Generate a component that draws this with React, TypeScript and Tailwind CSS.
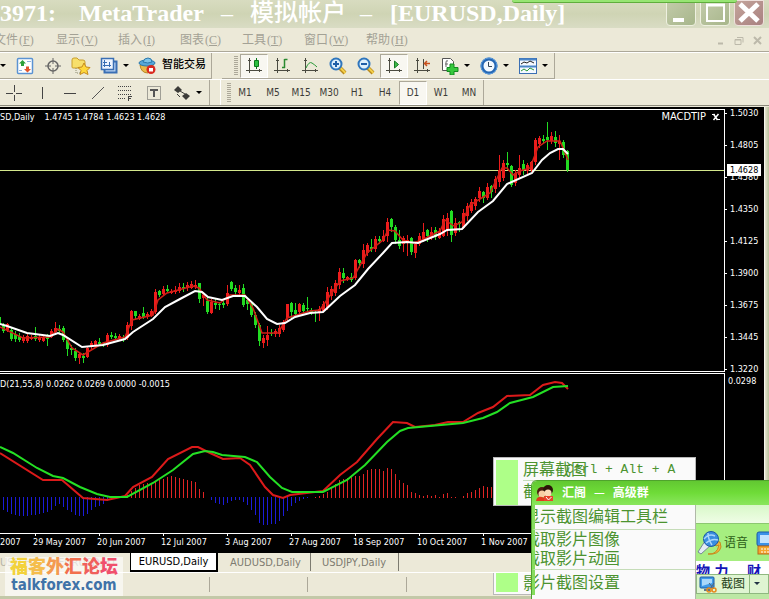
import type { ReactNode } from "react";

type Candle = [dir: "u" | "d", high: number, top: number, bottom: number, low: number];

// Screen rows of each candle, one every 4px
const candles: Candle[] = [
  ["d",315,317,325,327],["d",323,325,331,333],["u",323,324,330,332],["d",327,330,339,341],["d",331,334,339,342],
  ["d",333,336,340,342],["u",335,337,341,343],["u",333,336,341,343],["u",335,337,339,340],["d",327,336,339,341],
  ["u",335,337,340,342],["u",336,337,341,342],["d",334,336,339,346],["u",329,331,337,338],["u",322,328,332,334],
  ["d",325,329,331,333],["d",326,328,340,342],["d",338,340,349,356],["d",345,348,350,355],["d",348,351,358,361],
  ["u",353,354,358,364],["d",353,356,358,363],["u",346,348,357,358],["u",341,343,347,349],["u",340,341,345,347],
  ["d",338,342,344,345],["d",342,343,345,347],["u",333,335,345,347],["d",332,335,337,339],["d",333,336,338,340],
  ["u",334,336,339,341],["d",335,337,338,342],["u",322,325,338,340],["u",310,311,326,330],["d",311,311,316,320],
  ["u",314,316,319,320],["d",307,313,317,319],["u",312,314,317,319],["u",309,311,316,317],["u",289,292,312,314],
  ["d",290,291,295,297],["u",286,289,294,296],["d",285,289,291,292],["u",289,291,293,294],["u",286,290,292,294],
  ["u",283,287,291,293],["d",283,287,288,292],["u",282,285,288,291],["u",281,284,288,289],["u",280,285,287,289],
  ["d",283,283,299,303],["u",292,295,298,306],["d",298,301,312,314],["u",299,302,313,314],["d",299,303,305,309],
  ["d",302,304,305,310],["d",300,303,305,308],["u",285,293,304,306],["d",281,282,289,291],["d",285,288,292,295],
  ["u",285,290,293,296],["d",284,288,305,307],["d",298,300,304,310],["d",302,304,315,317],["d",312,315,325,328],
  ["d",323,325,341,346],["u",335,338,343,348],["u",326,335,340,346],["d",329,333,334,336],["u",329,331,334,337],
  ["u",325,328,334,337],["u",320,322,330,332],["u",304,304,318,322],["d",302,303,312,318],["d",303,310,314,316],
  ["u",303,304,312,314],["d",303,305,311,313],["d",297,308,309,312],["d",308,310,312,315],["d",310,312,313,322],
  ["u",306,309,312,321],["u",301,304,311,312],["u",287,292,308,310],["u",286,289,296,300],["u",280,283,293,296],
  ["u",268,272,285,289],["d",268,273,278,283],["u",276,277,279,281],["d",273,277,280,282],["u",259,260,278,280],
  ["d",259,260,263,268],["u",244,250,264,268],["u",243,245,253,256],["d",239,247,249,252],["u",236,239,249,252],
  ["d",236,239,241,244],["u",230,236,241,242],["u",218,222,236,242],["d",218,219,227,232],["d",225,227,240,244],
  ["d",230,240,246,249],["u",236,238,244,252],["u",235,240,242,256],["d",237,238,252,255],["u",242,244,253,258],
  ["u",233,236,244,246],["u",223,232,240,242],["d",229,230,236,242],["u",227,232,238,240],["d",227,230,237,240],
  ["u",228,231,238,239],["u",215,219,236,237],["u",213,218,230,236],["d",210,211,235,242],["u",218,223,233,236],
  ["d",221,222,224,232],["u",209,213,228,229],["u",203,206,216,221],["u",199,202,211,213],["u",197,199,206,210],
  ["u",187,191,198,202],["d",191,192,198,203],["u",183,187,198,200],["d",185,186,192,198],["u",176,179,189,193],
  ["u",155,170,182,187],["u",160,163,178,181],["d",152,163,165,170],["d",165,166,185,187],["u",170,173,183,186],
  ["u",155,168,175,178],["d",160,164,170,175],["u",163,165,171,174],["u",161,162,170,172],["u",138,140,162,165],
  ["u",136,138,144,148],["d",135,139,141,143],["d",122,137,140,150],["u",132,136,141,144],["d",131,137,143,147],
  ["u",135,141,144,160],["d",140,142,155,158],["d",150,151,170,172],
];

// Positive bars are drawn red above the zero line, negative ones blue below
const histogram = [
  -13,-15,-17,-18,-19,-19,-19,-18,-18,-17,-16,-15,-13,-9,-7,-10,-13,-15,-18,-19,-19,-17,-13,-10,-9,-7,-4,-2,0,0,0,
  3,7,10,13,14,15,15,17,18,19,21,22,21,20,19,18,17,16,9,6,0,
  -3,-6,-7,-8,-6,-4,-3,-3,-5,-8,-13,-18,-26,-28,-28,-27,-27,-24,-19,-14,-9,-6,-4,-2,-1,0,
  1,2,4,6,10,14,18,19,20,21,22,22,24,28,29,29,29,27,30,29,24,18,15,13,6,5,3,2,3,2,3,1,4,5,1,1,0,
  2,5,6,8,10,12,11,11,10,11,11,10,
];

const slowLine =
  "0,324 7,326 27,333 50,336 58,333 63,335 82,347 103,345 125,339 133,332 153,319 165,307 180,299 195,291 202,292 208,297 222,300 233,296 245,296 257,307 267,319 277,324 285,323 295,317 310,313 323,312 340,296 355,285 368,269 383,253 392,243 407,242 418,243 440,234 447,230 462,229 478,212 493,201 507,184 532,173 542,160 550,153 558,149 563,149 568,154";
const fastLine =
  "0,327 23,338 50,337 58,329 63,332 72,348 83,355 88,352 103,343 125,337 132,320 153,315 158,300 167,293 193,286 199,288 207,300 220,303 230,295 245,295 253,308 262,333 278,333 287,318 310,311 320,310 340,281 353,278 367,253 383,240 388,230 395,231 403,240 413,243 422,240 440,231 445,220 454,226 462,222 470,205 490,193 502,168 507,168 513,175 520,171 530,168 538,147 547,141 560,141 568,160";
const macdLine =
  "0,453 43,480 62,480 83,498 107,500 125,496 133,487 152,477 168,459 192,447 198,447 210,453 223,459 240,458 250,465 265,487 273,495 283,498 290,495 323,491 340,475 357,462 377,439 393,422 407,423 415,427 435,425 448,422 463,422 478,413 493,407 507,396 530,395 543,385 555,382 562,383 568,389";
const signalLine =
  "0,447 13,453 37,468 53,476 63,478 80,487 97,494 110,497 127,497 153,483 173,470 193,454 205,451 213,452 222,455 245,457 257,462 270,477 282,488 292,492 323,492 347,480 365,465 387,442 400,431 408,428 463,423 483,418 497,412 510,403 533,397 553,387 568,386";

const prices = ["1.5030", "1.4805", "1.4580", "1.4350", "1.4125", "1.3900", "1.3675", "1.3445", "1.3220"];
const dates = ["29 May 2007", "20 Jun 2007", "12 Jul 2007", "3 Aug 2007", "27 Aug 2007", "18 Sep 2007", "10 Oct 2007", "1 Nov 2007"];
const menus = [
  ["文件", "F"], ["显示", "V"], ["插入", "I"], ["图表", "C"], ["工具", "T"], ["窗口", "W"], ["帮助", "H"],
];
const periods = ["M1", "M5", "M15", "M30", "H1", "H4", "D1", "W1", "MN"];

export default function App() {
  return (
    <div className="relative flex min-h-screen w-full flex-col overflow-hidden bg-[#ece9d8] font-['DejaVu_Sans_Condensed','DejaVu_Sans','Noto_Sans_CJK_SC',sans-serif]">
      <TitleBar />
      <MenuBar />
      <StandardToolbar />
      <PeriodToolbar />
      <div className="flex border-t border-[#8c8a7c] pt-px">
        <Chart />
        <div className="w-[5px] shrink-0 border-l border-[#f6f6ee] bg-gradient-to-r from-[#e4e4cf] to-[#bcc29e]" />
      </div>
      <ChartTabs />
      <StatusBar />
      <CaptureMenu />
      <ChatWindow />
    </div>
  );
}

function TitleBar() {
  return (
    <header className="flex h-7 items-center justify-between bg-gradient-to-b from-[#d8dcc0] via-[#cfd4b4] to-[#d9dcc4]">
      <h1 className="flex items-center whitespace-pre pb-0.5 font-['Liberation_Serif','Noto_Sans_CJK_SC',serif] text-2xl leading-6 font-bold text-white">
        <span className="w-[79px]">3971:</span>
        <span className="w-[142px]">MetaTrader</span>
        <span className="w-[29px] font-normal">–</span>
        <span className="w-[110px] font-medium">模拟帐户</span>
        <span className="w-[30px] font-normal">–</span>
        <span>[EURUSD,Daily]</span>
      </h1>
      <div className="flex h-7 gap-1 pr-[5px]">
        <button aria-label="Minimize" className="h-[26px] w-[30px] rounded-b border border-[#eef0e0] bg-gradient-to-br from-[#c3cbaa] to-[#a7b68b]">
          <svg width="28" height="24"><rect x="6" y="17" width="11" height="4" fill="#fff" /></svg>
        </button>
        <button aria-label="Maximize" className="h-[26px] w-[30px] rounded-b border border-[#eef0e0] bg-gradient-to-br from-[#c3cbaa] to-[#a7b68b]">
          <svg width="28" height="24"><path d="M6 4h17v16H6z" fill="none" stroke="#fff" strokeWidth="2" /><path d="M5 4h19" stroke="#fff" strokeWidth="3" /></svg>
        </button>
        <button aria-label="Close" className="h-[26px] w-[30px] rounded-b border border-[#eee0dc] bg-gradient-to-br from-[#c4a59c] to-[#a98180]">
          <svg width="28" height="24"><path d="M5 3l18 17M23 3L5 20" stroke="#fff" strokeWidth="5" /></svg>
        </button>
      </div>
      <div className="absolute top-0 right-8 h-[3px] w-[225px] rounded-b-lg border-b border-[#5fae3c] bg-[#97e573]" />
    </header>
  );
}

function MenuBar() {
  return (
    <nav className="flex h-6 items-center justify-between border-b border-[#aca899] pr-[6px] text-[#a3a195]">
      <div className="-ml-1.5 flex">
        {menus.map(([name, key]) => (
          <button key={key} className="flex w-[62px] items-center text-xs leading-4 whitespace-nowrap">
            {name}
            <span className="pl-px font-['Liberation_Serif',serif]">(<u>{key}</u>)</span>
          </button>
        ))}
      </div>
      <svg width="46" height="12" fill="none" stroke="#bcb9aa">
        <path d="M1 9.500h5" strokeWidth="2" />
        <path d="M20 3.500h6v5M18 5.500h6v5h-6zM18 6h6" />
        <path d="M37 3l7 7M44 3l-7 7" strokeWidth="2" />
      </svg>
    </nav>
  );
}

function ToolButton({ label, pressed, children }: { label: string; pressed?: boolean; children: ReactNode }) {
  return (
    <button
      aria-label={label}
      className={`flex h-6 w-7 shrink-0 items-center justify-center border ${
        pressed ? "border-[#aca899] border-r-white border-b-white bg-[#f8f7f1]" : "border-transparent"
      }`}
    >
      {children}
    </button>
  );
}

function DropArrow({ label }: { label: string }) {
  return (
    <button aria-label={label} className="flex h-6 w-[11px] shrink-0 items-center">
      <svg width="6" height="4"><path d="M0 0h6L3 3z" fill="#000" /></svg>
    </button>
  );
}

function Grip() {
  return (
    <div className="flex flex-col gap-px pl-1">
      {Array.from({ length: 10 }, (_, i) => (
        <span key={i} className="h-px w-1 bg-[#aca899]" />
      ))}
    </div>
  );
}

const axes = "M3.500 1v15M0 13.500h16M2 3.500h3M13.500 12v3";

function StandardToolbar() {
  return (
    <div className="flex h-[27px] border-t border-white">
      <div className="flex w-[212px] items-center border-r border-b border-[#aca899]">
        <DropArrow label="New chart list" />
        <ToolButton label="Market watch">
          <svg width="18" height="18"><rect x="1.500" y="1.500" width="15" height="15" rx="1" fill="#fff" stroke="#5b93d2" strokeWidth="1.500" /><path d="M6.500 3l3.500 3.500H8V9H5V6.500H3z" fill="#2fa03a" /><path d="M11.500 15.500L8 12h2V9.500h3V12h2z" fill="#e2552c" /><path d="M11 4.500h4M3 13.500h3" stroke="#8fb4e0" /></svg>
        </ToolButton>
        <ToolButton label="Data window">
          <svg width="16" height="16" fill="none" stroke="#666"><circle cx="8" cy="8" r="5" strokeWidth="1.500" /><path d="M8 0v6M8 10v6M0 8h6M10 8h6" /></svg>
        </ToolButton>
        <ToolButton label="Navigator">
          <svg width="20" height="18"><path d="M1 3q0-2 2-2h3l2 2h4q2 0 2 2v5q0 1-1 1H2q-1 0-1-1z" fill="#f7df6b" stroke="#c99e2c" /><path d="M5 11v5h5" fill="none" stroke="#8a8a70" strokeDasharray="1 1" /><path d="M13 6l2 4 4 .5-3 3 1 4-4-2-4 2 1-4-3-3 4-.5z" fill="#ffd83a" stroke="#c58a1c" /></svg>
        </ToolButton>
        <ToolButton label="Terminal">
          <svg width="18" height="18" stroke="#3a6fb4"><path d="M4.500 4.500h12v11h-12z" fill="#bcd5f2" strokeWidth="2" /><path d="M1.500 1.500h12v11h-12z" fill="#eef5ff" strokeWidth="1.500" /><path d="M4.500 3v7M3 8.500h8M9.500 5v5M3 5.500h4" fill="none" /></svg>
        </ToolButton>
        <DropArrow label="Window list" />
        <button className="flex h-6 items-center gap-1.5 pl-1 text-black">
          <svg width="18" height="18"><path d="M2 8q1 8 8 8l5-5V7z" fill="#e9b949" stroke="#b98520" /><ellipse cx="9" cy="6" rx="8" ry="3" fill="#57a7d8" stroke="#2b78ac" /><path d="M5 5q1-4 5-4t4 4q-4 2-9 0z" fill="#7cc4ea" stroke="#2b78ac" /><circle cx="13" cy="12.500" r="4.500" fill="#d92a20" /><rect x="11" y="11" width="4" height="3.500" fill="#fff" /></svg>
          <span className="text-[11px] font-medium whitespace-nowrap">智能交易</span>
        </button>
      </div>
      <div className="ml-[10px] flex w-[333px] items-center border-r border-b border-[#aca899] pl-2">
        <Grip />
        <div className="flex items-center pl-0.5">
          <ToolButton label="Candlesticks" pressed>
            <svg width="17" height="17" fill="none" stroke="#4a4a40"><path d={axes} /><path d="M10.500 1v11" stroke="#0a7a1c" /><path d="M8.500 3.500h4v6h-4z" fill="#2cc040" stroke="#0a7a1c" /></svg>
          </ToolButton>
          <ToolButton label="Bar chart">
            <svg width="17" height="17" fill="none" stroke="#4a4a40"><path d={axes} /><path d="M10.500 2v9M10.500 2.500h3M8 10.500h3" stroke="#2a8a30" strokeWidth="1.500" /></svg>
          </ToolButton>
          <ToolButton label="Line chart">
            <svg width="17" height="17" fill="none" stroke="#4a4a40"><path d={axes} /><path d="M4 11q3-7 6-5t5 4" stroke="#2a9a38" /></svg>
          </ToolButton>
          <ToolButton label="Zoom in"><Magnifier plus /></ToolButton>
          <ToolButton label="Zoom out"><Magnifier /></ToolButton>
          <ToolButton label="Auto scroll" pressed>
            <svg width="17" height="17" fill="none" stroke="#4a4a40"><path d={axes} /><path d="M8.500 4l4 3.500-4 3.500z" fill="#3cba48" stroke="#167a24" /></svg>
          </ToolButton>
          <ToolButton label="Chart shift">
            <svg width="17" height="17" fill="none" stroke="#4a4a40"><path d={axes} /><path d="M9.500 2v10" /><path d="M16 6.500h-5M13 4l-2.500 2.500L13 9" stroke="#c8501c" strokeWidth="1.500" /></svg>
          </ToolButton>
          <ToolButton label="Indicators">
            <svg width="18" height="18"><path d="M1.500 1.500h8l3 3v9h-11z" fill="#fff" stroke="#555" /><path d="M5 10V5q0-2 2-1M4 7h3" fill="none" stroke="#666" /><path d="M9 7h4v3.500h4v4h-4V18H9v-3.500H6v-4h3z" fill="#36c83c" stroke="#128a20" /></svg>
          </ToolButton>
          <DropArrow label="Indicator list" />
          <ToolButton label="Periods">
            <svg width="18" height="18"><circle cx="9" cy="9" r="7" fill="#f3f9ff" stroke="#2567b4" strokeWidth="3" /><circle cx="9" cy="9" r="8" fill="none" stroke="#5d9cdc" /><path d="M8.500 5v4.500H12" fill="none" stroke="#345" /></svg>
          </ToolButton>
          <DropArrow label="Period list" />
          <ToolButton label="Templates">
            <svg width="18" height="16"><rect x=".5" y=".5" width="17" height="15" fill="#f4f9ff" stroke="#3a6fb4" /><path d="M1 1.500h16M1 8.500h16" stroke="#4a86c8" strokeWidth="2" /><path d="M2 6l3-2 3 1 3-2 4 2" fill="none" stroke="#222" /><path d="M2 13l3-2 3 2 3-3 4 2" fill="none" stroke="#2a9a38" /></svg>
          </ToolButton>
          <DropArrow label="Template list" />
        </div>
      </div>
    </div>
  );
}

function Magnifier({ plus }: { plus?: boolean }) {
  return (
    <svg width="18" height="18">
      <path d="M10.500 10.500l5.500 5.500" stroke="#b98a1c" strokeWidth="4" />
      <path d="M11 10.500l5.500 5.500" stroke="#f3cf4a" strokeWidth="2" />
      <circle cx="7" cy="7" r="5.500" fill="#dff0fd" stroke="#2f76bd" strokeWidth="2" />
      <path d={plus ? "M4 7h6M7 4v6" : "M4 7h6"} stroke="#1f5fa8" strokeWidth="2" />
    </svg>
  );
}

function PeriodToolbar() {
  return (
    <div className="flex h-[26px] border-t border-white">
      <div className="flex w-[210px] items-center border-r border-[#aca899]">
        <ToolButton label="Crosshair"><svg width="16" height="16" stroke="#444"><path d="M8.500 0v7M8.500 10v6M0 8.500h7M10 8.500h6" /></svg></ToolButton>
        <ToolButton label="Vertical line"><svg width="14" height="14" stroke="#444"><path d="M7.500 1v12" /></svg></ToolButton>
        <ToolButton label="Horizontal line"><svg width="14" height="14" stroke="#444"><path d="M1 7.500h12" /></svg></ToolButton>
        <ToolButton label="Trend line"><svg width="14" height="14" stroke="#555"><path d="M1 13L13 1" /></svg></ToolButton>
        <ToolButton label="Fibonacci retracement">
          <svg width="16" height="18" fill="none" stroke="#444"><path d="M0 2.500h14M0 6.500h14M0 10.500h14M0 14.500h8" strokeDasharray="1 1" /><path d="M10.500 17v-5M10 12.500h4M10 14.500h3" /></svg>
        </ToolButton>
        <ToolButton label="Text label">
          <svg width="14" height="14" fill="none" stroke="#555"><path d="M.5.5h13v13H.5z" strokeDasharray="1 1" /><path d="M3 4h8M7 4v7" strokeWidth="2" /></svg>
        </ToolButton>
        <ToolButton label="Arrows">
          <svg width="16" height="14" fill="#3c3c38"><path d="M4 0l4 4-4 3-4-3zM12 7l4 3-4 4-4-4z" /><path d="M3 8l3 3M6 5l5 3" stroke="#3c3c38" /></svg>
        </ToolButton>
        <DropArrow label="Arrow list" />
      </div>
      <div className="ml-[10px] flex w-[264px] items-center border-r border-l border-[#aca899] border-l-white pl-0.5">
        <Grip />
        <div className="flex">
          {periods.map((p) => (
            <button
              key={p}
              aria-pressed={p === "D1"}
              className={`h-6 w-7 shrink-0 text-[10px] leading-4 text-[#3c3c38] ${
                p === "D1" ? "border border-[#aca899] border-r-white border-b-white bg-[#f8f7f1]" : ""
              }`}
            >
              {p}
            </button>
          ))}
        </div>
      </div>
    </div>
  );
}

function Chart() {
  return (
    <main className="min-w-0 flex-1 bg-black text-[9px] leading-3 text-white">
      <div className="flex pt-0.5">
        <div className="min-w-0 flex-1">
          <section className="relative h-[263px] overflow-hidden border-t border-r border-b border-white">
            <svg className="block h-full w-full" aria-label="EURUSD daily chart">
              <g transform="translate(0 -110)">
                <path d="M0 170.500h2000" stroke="#d4e88c" />
                {candles.map(([dir, high, top, bottom, low], i) => (
                  <g key={i} fill={dir === "u" ? "#ec1c1c" : "#22dc22"}>
                    <rect x={i * 4 - 1} y={high} width="1" height={low - high} />
                    <rect x={i * 4 - 2} y={top} width="3" height={bottom - top} />
                  </g>
                ))}
                <polyline points={fastLine} fill="none" stroke="#d01f16" strokeWidth="1.500" />
                <polyline points={slowLine} fill="none" stroke="#fff" strokeWidth="2" />
              </g>
            </svg>
            <div className="absolute inset-x-0 top-0 flex items-center justify-between pt-px pr-1">
              <div className="flex gap-[10px]">
                <span>SD,Daily</span>
                <span>1.4745 1.4784 1.4623 1.4628</span>
              </div>
              <div className="flex items-center gap-1.5 text-[11px]">
                <span>MACDTIP</span>
                <svg width="8" height="8" fill="none" stroke="#fff"><path d="M1.500 1l4 6M6.500 1l-5 6" strokeWidth="1.500" /><path d="M0 1.500h3M5 6.500h3" /></svg>
              </div>
            </div>
          </section>
          <section className="relative mt-px h-[161px] overflow-hidden border-t border-r border-b border-white">
            <svg className="block h-full w-full" aria-label="MACD indicator">
              <g transform="translate(0 -374)">
                {histogram.map((v, i) => (
                  <rect key={i} x={i * 4 + 3} y={v > 0 ? 498 - v : 497} width="1" height={Math.abs(v)} fill={v > 0 ? "#e02424" : "#1c1cd8"} />
                ))}
                <polyline points={macdLine} fill="none" stroke="#dc1a1a" strokeWidth="2" />
                <polyline points={signalLine} fill="none" stroke="#24e024" strokeWidth="2" />
              </g>
            </svg>
            <p className="absolute top-1 left-0">D(21,55,8) 0.0262 0.0269 0.0000 -0.0015</p>
          </section>
        </div>
        <div className="relative w-[39px] shrink-0">
          <ul className="-mt-0.5 h-[268px]">
            {prices.map((p, i) => (
              <li key={p} className={`flex items-center gap-[3px] ${i < prices.length - 1 ? "mb-5" : ""}`}>
                <span className="h-px w-0.5 bg-white" />
                {p}
              </li>
            ))}
          </ul>
          <p className="pl-[3px]">0.0298</p>
          <p className="absolute top-[55px] left-0.5 bg-white px-[3px] text-black">1.4628</p>
        </div>
      </div>
      <div className="flex h-[17px] overflow-hidden whitespace-nowrap">
        <span className="w-[33px] shrink-0 pt-0.5">2007</span>
        {dates.map((d) => (
          <div key={d} className="w-16 shrink-0">
            <span className="ml-0.5 block h-0.5 w-px bg-white" />
            {d}
          </div>
        ))}
      </div>
    </main>
  );
}

function ChartTabs() {
  return (
    <div className="relative flex h-[22px] items-start border-t-2 border-black border-b border-b-white text-[11px] text-[#7d7b70]">
      <div className="flex w-[130px] shrink-0 gap-5 overflow-hidden pt-0.5 leading-4 whitespace-nowrap text-[#b5b2a5]">
        <button>USD,H1</button>
        <button>EURUSD,H1</button>
      </div>
      <button className="h-[19px] w-[88px] shrink-0 border-r-2 border-b-2 border-l border-black bg-white leading-4 text-black">EURUSD,Daily</button>
      <button className="ml-3 w-[81px] border-r border-[#7d7b70] pt-0.5 text-left leading-4">AUDUSD,Daily</button>
      <button className="ml-[11px] w-[77px] border-r border-[#7d7b70] pt-0.5 text-left leading-4">USDJPY,Daily</button>
      <a href="#talkforex" className="absolute top-1 left-[5px] h-[39px] w-[118px] bg-white/60 text-center">
        <span className="block text-[18px] leading-5 font-black">
          <span className="text-[#f3d23c]">福</span>
          <span className="text-[#f5bd4c]">客</span>
          <span className="text-[#f49a50]">外</span>
          <span className="text-[#f2704e]">汇</span>
          <span className="text-[#f0605c]">论</span>
          <span className="text-[#f0506c]">坛</span>
        </span>
        <span className="block text-[15px] leading-4 font-bold text-[#3f73a8]">talkforex.com</span>
      </a>
    </div>
  );
}

function StatusBar() {
  return (
    <footer className="flex h-[26px] border-b-[3px] border-[#c3c8a8] py-1 pl-[110px]">
      <span className="w-[100px] border-r border-[#aca899]" />
      <span className="w-[98px] border-r border-[#aca899]" />
      <span className="w-[99px] border-r border-[#aca899]" />
    </footer>
  );
}

// Screen capture menu, partly hidden behind the chat window
function CaptureMenu() {
  return (
    <div className="text-base leading-5 whitespace-nowrap text-[#4c9330]">
      <div className="absolute right-[73px] bottom-[93px] flex h-[49px] w-[203px] border border-[#b8b8b8] bg-[#fafafa] p-0.5 pb-0">
        <span className="w-[22px] bg-[#aeff88]" />
        <div className="relative flex-1 pl-[5px]">
          <button className="flex h-[21px] w-full items-center border-b border-[#c5dcb8] text-left">
            屏幕截图
          </button>
          <kbd className="absolute top-0 left-12 font-['Liberation_Mono',monospace] text-[13px]">Ctrl + Alt + A</kbd>
          <button className="block pt-px">截取</button>
        </div>
      </div>
      <div className="absolute right-[73px] bottom-1 flex h-[22px] w-[203px] border border-t-0 border-[#b8b8b8] bg-[#fafafa] px-0.5">
        <span className="h-[19px] w-[22px] bg-[#aeff88]" />
        <button className="pl-[5px]">影</button>
      </div>
    </div>
  );
}

function ChatWindow() {
  return (
    <div className="absolute right-0 bottom-0 flex h-[119px] w-[238px] flex-col overflow-hidden rounded-tl-md border-t border-l border-[#4fa32c] bg-[#fafafa]">
      <div className="flex h-6 shrink-0 items-center gap-2 bg-gradient-to-b from-[#62c832] via-[#6fdc38] to-[#8ae65c] pl-1 text-xs font-bold text-white">
        <svg width="18" height="18"><circle cx="6" cy="8" r="5" fill="#4a1c10" /><circle cx="12" cy="6" r="5" fill="#2c1408" /><circle cx="6" cy="10" r="3.500" fill="#f8cfa4" /><circle cx="12" cy="9" r="3.500" fill="#fbdcb8" /><path d="M0 17q1-5 6-4t5 4z" fill="#e03c1c" /><path d="M8 12h9v5H8z" fill="#e8442c" /><path d="M10 13l2.500 3 3-3" fill="none" stroke="#fff" /></svg>
        <span className="flex gap-2 whitespace-nowrap"><span>汇阁</span><span className="font-normal">—</span><span>高级群</span></span>
      </div>
      <div className="flex min-h-0 flex-1">
        <div className="flex w-[164px] shrink-0 flex-col border-r border-[#b0b8a8]">
          <MenuLine lead="显" text="示截图编辑工具栏" className="h-6" />
          <MenuLine lead="截" text="取影片图像" className="h-5 border-t border-[#c5dcb8]" />
          <MenuLine lead="截" text="取影片动画" className="h-5" />
          <MenuLine lead="影" text="片截图设置" className="h-[26px] border-t border-[#c5dcb8]" />
        </div>
        <div className="flex min-w-0 flex-1 flex-col">
          <div className="h-[18px] bg-gradient-to-b from-[#d8f8c8] to-[#effde6]" />
          <div className="flex h-[38px] items-center overflow-hidden border-t border-[#8cc870] bg-[#a6ee80] text-xs text-[#2d5f18]">
            <button className="flex shrink-0 items-center gap-0.5">
              <svg width="26" height="26"><path d="M12 24q9 1 11-9l-3 1-4-5 8 1 1 5q-2 8-13 7z" fill="#f4b53c" stroke="#c88a1c" /><path d="M2 22l7-11 6 4-10 9z" fill="#e4ecf4" stroke="#789" /><circle cx="15" cy="9" r="7.500" fill="#3a8ee0" stroke="#1c5aa4" /><path d="M8 9q5-6 11-3M10 13q6-5 12-3M12 3q0 6 4 12" fill="none" stroke="#a9d6fb" strokeWidth="1.500" /></svg>
              语音
            </button>
            <button aria-label="Phone" className="shrink-0 pl-2">
              <svg width="14" height="24"><rect x="1" y="1" width="14" height="14" rx="2" fill="#3b92e8" stroke="#1c5aa4" /><rect x="4" y="4" width="11" height="8" fill="#c4e4ff" /><rect x="2" y="15" width="13" height="8" fill="#f5a62e" stroke="#b8681c" /><path d="M5 18h9M5 21h9" stroke="#fff" strokeDasharray="2 1" /></svg>
            </button>
          </div>
          <div className="h-[13px] shrink-0 overflow-hidden bg-white pt-0.5 font-bold text-[#1414b8]">
            <p className="flex justify-between pr-2 text-sm leading-4"><span>物 力</span><span>财</span></p>
          </div>
          <div className="flex h-5 items-center border border-[#8fb880] bg-[#dff5d2] text-xs text-[#1f3f18]">
            <button className="flex items-center gap-1 pl-0.5 whitespace-nowrap">
              <svg width="18" height="17"><rect x="1" y="1" width="14" height="11" rx="1" fill="#3f9ae8" stroke="#1c5aa4" /><path d="M3 3h10v4L3 10z" fill="#a9d8fb" /><path d="M5 14h6" stroke="#678" strokeWidth="2" /><path d="M10 7l5 6M15 7l-4 6" stroke="#567" /><circle cx="10" cy="14" r="2" fill="none" stroke="#e68a1c" strokeWidth="1.500" /><circle cx="15" cy="14" r="2" fill="none" stroke="#e68a1c" strokeWidth="1.500" /></svg>
              截图
            </button>
            <button aria-label="Capture options" className="ml-1 flex h-full items-center border-l border-[#8fb880] px-1">
              <svg width="6" height="4"><path d="M0 0h6L3 3z" fill="#234" /></svg>
            </button>
          </div>
          <div className="h-1 flex-1 bg-[#bce8a4]" />
        </div>
      </div>
    </div>
  );
}

// The first glyph is cut off by the window edge
function MenuLine({ lead, text, className }: { lead: string; text: string; className: string }) {
  return (
    <button className={`flex w-full shrink-0 items-center border-l-[3px] border-l-[#86dc5e] text-base leading-5 whitespace-nowrap text-[#4c9330] ${className}`}>
      <span className="flex w-[5px] justify-end overflow-hidden"><span>{lead}</span></span>
      {text}
    </button>
  );
}
